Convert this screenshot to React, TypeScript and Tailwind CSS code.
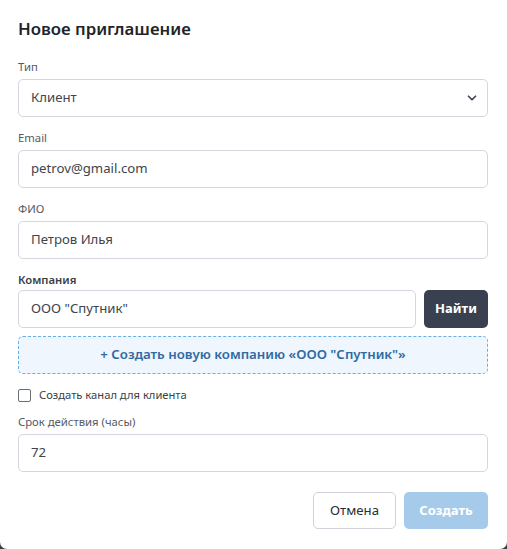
import { ChevronDown } from 'lucide-react';

function Field({ label, value, className = '' }: { label: string; value: string; className?: string }) {
  return (
    <div className={`flex flex-col ${className}`}>
      <label className="text-[11.3px] leading-[18px] text-[#555b66] mb-[3px]">{label}</label>
      <div className="h-[38px] border border-[#d4d7de] rounded-[5px] px-3 flex items-center text-[13.2px] text-[#40444c]">
        {value}
      </div>
    </div>
  );
}

export default function App() {
  return (
    <div className="w-[507px] h-[549px] bg-[#3b3f45]" style={{ fontFamily: '"Noto Sans", "Open Sans", sans-serif' }}>
      <div className="w-full h-full bg-white rounded-b-[7px] pl-[18px] pr-[19px] pt-[15px] flex flex-col">
        <h2 className="text-[16.8px] leading-[28px] font-semibold text-[#222428]">Новое приглашение</h2>

        <div className="mt-[15px] flex flex-col gap-3">
          <div className="flex flex-col">
            <label className="text-[11.3px] leading-[18px] text-[#555b66] mb-[3px]">Тип</label>
            <div className="h-[38px] border border-[#d4d7de] rounded-[5px] pl-3 pr-2 flex items-center justify-between text-[13.2px] text-[#40444c]">
              <span>Клиент</span>
              <ChevronDown size={14} strokeWidth={3} className="text-[#3f4652]" />
            </div>
          </div>

          <Field label="Email" value="petrov@gmail.com" />
          <Field label="ФИО" value="Петров Илья" />

          <div className="flex flex-col">
            <label className="text-[11.3px] leading-[18px] text-[#3a3f47] font-semibold mb-[1px]">Компания</label>
            <div className="flex gap-2">
              <div className="flex-1 h-[38px] border border-[#d4d7de] rounded-[5px] px-3 flex items-center text-[13.2px] text-[#40444c]">
                ООО "Спутник"
              </div>
              <button className="w-[64px] h-[38px] rounded-[5px] bg-[#394150] text-white text-[13px] font-bold">Найти</button>
            </div>
            <div className="mt-2 h-[38px] border border-dashed border-[#6aaee6] rounded-[5px] bg-[#eff6fd] flex items-center justify-center text-[13.3px] font-semibold text-[#2f6aa3]">
              + Создать новую компанию «ООО "Спутник"»
            </div>
          </div>

          <div className="flex items-center gap-2 h-4 mt-[1px]">
            <span className="w-[13px] h-[13px] border border-[#6b6f76] rounded-[2px]" />
            <span className="text-[11.2px] text-[#3a3f47]">Создать канал для клиента</span>
          </div>

          <Field label="Срок действия (часы)" value="72" className="-mt-[2px]" />
        </div>

        <div className="mt-5 flex justify-end gap-2">
          <button className="w-[83px] h-[37px] border border-[#cfd2d8] rounded-[5px] text-[13.2px] text-[#2a2d33] bg-white">Отмена</button>
          <button className="w-[84px] h-[37px] rounded-[5px] bg-[#a6cbea] text-white text-[13px] font-bold">Создать</button>
        </div>
      </div>
    </div>
  );
}
